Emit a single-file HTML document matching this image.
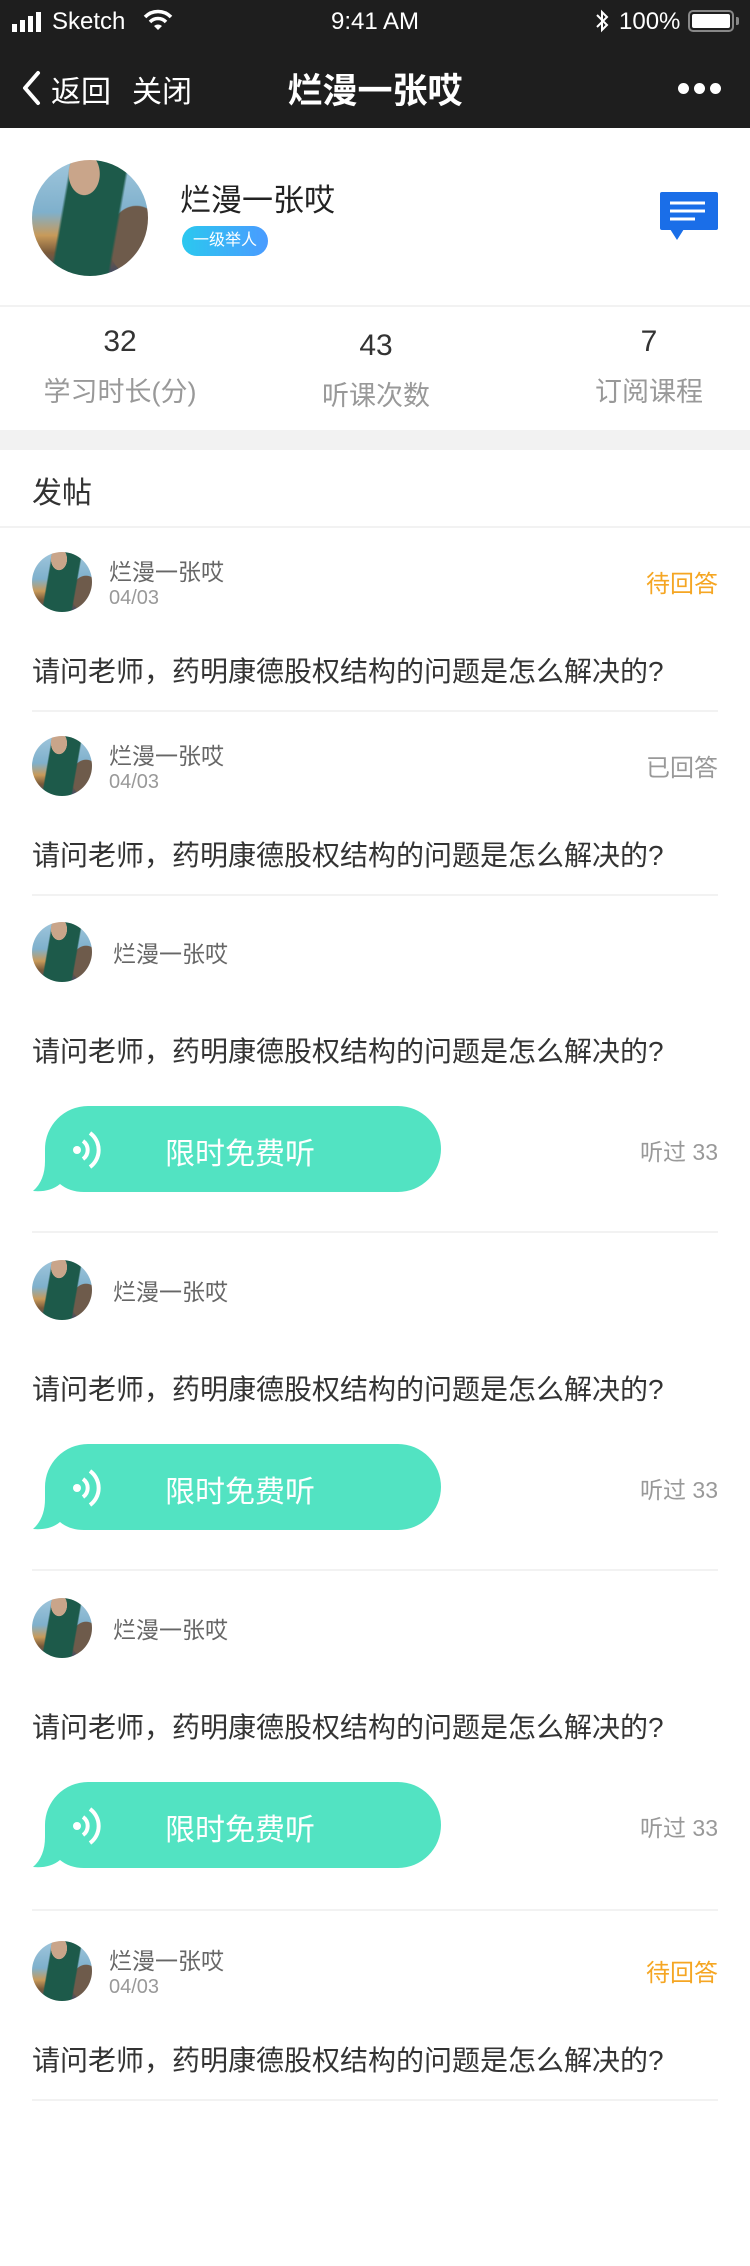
<!DOCTYPE html>
<html><head><meta charset="utf-8"><style>
*{margin:0;padding:0;box-sizing:border-box}
body{width:750px;height:2266px;background:#fff;position:relative;overflow:hidden;font-family:"Liberation Sans","Noto Sans CJK SC",sans-serif;color:#333}
.a{position:absolute;white-space:nowrap}
.av{position:absolute;border-radius:50%;overflow:hidden;background:
radial-gradient(ellipse 22% 30% at 45% 12%,#c9a58a 0 60%,transparent 62%),
linear-gradient(100deg,transparent 0 28%,#1d5a4a 30% 70%,transparent 72%),
radial-gradient(ellipse 40% 50% at 90% 70%,#6e5b4b 0 60%,transparent 62%),
linear-gradient(180deg,#9fc6dc 0%,#7fb0cc 45%,#c89a5a 65%,#7a5a3a 80%,#3a4a6a 100%)}
.nm{font-size:23px;color:#666}
.dt{font-size:20px;color:#999}
.q{font-size:28px;color:#333}
.ln{position:absolute;left:32px;width:686px;height:2px;background:#f2f2f2}
.st{font-size:24px;right:32px}
.bt{font-size:30px;color:#fff}
.ls{font-size:23px;color:#999;right:32px}
</style></head><body>
<div class="a" style="left:0;top:0;width:750px;height:128px;background:#1e1e1e"></div>
<svg class="a" style="left:12px;top:12px" width="36" height="20"><rect x="0" y="12" width="5" height="8" fill="#fff"/><rect x="8" y="8" width="5" height="12" fill="#fff"/><rect x="16" y="4" width="5" height="16" fill="#fff"/><rect x="24" y="0" width="5" height="20" fill="#fff"/></svg>
<div class="a" style="left:52px;top:8px;font-size:24px;color:#fff">Sketch</div>
<svg class="a" style="left:143px;top:9px" width="30" height="22" viewBox="0 0 30 22"><path d="M2 8 A18 18 0 0 1 28 8" stroke="#fff" stroke-width="3.5" fill="none"/><path d="M7 13 A11 11 0 0 1 23 13" stroke="#fff" stroke-width="3.5" fill="none"/><path d="M11 17 L15 21 L19 17 A6 6 0 0 0 11 17Z" fill="#fff"/></svg>
<div class="a" style="left:0;width:750px;text-align:center;top:8px;font-size:24px;color:#fff">9:41 AM</div>
<svg class="a" style="left:594px;top:9px" width="16" height="24" viewBox="0 0 16 24"><path d="M3 6 L13 16 L8 21 V3 L13 8 L3 18" stroke="#fff" stroke-width="2" fill="none"/></svg>
<div class="a" style="left:619px;top:8px;font-size:24px;color:#fff">100%</div>
<div class="a" style="left:688px;top:10px;width:46px;height:22px;border:2px solid #888;border-radius:5px;padding:2px"><div style="width:100%;height:100%;background:#fff;border-radius:2px"></div></div>
<div class="a" style="left:736px;top:17px;width:3px;height:8px;background:#888;border-radius:0 2px 2px 0"></div>
<svg class="a" style="left:20px;top:70px" width="24" height="36" viewBox="0 0 24 36"><path d="M18 3 L5 18 L18 33" stroke="#fff" stroke-width="4" fill="none" stroke-linecap="round" stroke-linejoin="round"/></svg>
<div class="a" style="left:51px;top:67px;font-size:30px;color:#fff">返回</div>
<div class="a" style="left:132px;top:67px;font-size:30px;color:#fff">关闭</div>
<div class="a" style="left:0;width:750px;text-align:center;top:63px;font-size:35px;font-weight:bold;color:#fff">烂漫一张哎</div>
<div class="a" style="left:678px;top:83px;width:11px;height:11px;border-radius:50%;background:#fff"></div>
<div class="a" style="left:694px;top:83px;width:11px;height:11px;border-radius:50%;background:#fff"></div>
<div class="a" style="left:710px;top:83px;width:11px;height:11px;border-radius:50%;background:#fff"></div>
<div class="av" style="left:32px;top:160px;width:116px;height:116px"></div>
<div class="a" style="left:180px;top:175px;font-size:31px;color:#222">烂漫一张哎</div>
<div class="a" style="left:182px;top:226px;width:86px;height:30px;border-radius:15px;background:linear-gradient(90deg,#2bc8ef,#4a9bff);color:#fff;font-size:16px;text-align:center;line-height:30px">一级举人</div>
<svg class="a" style="left:660px;top:192px" width="58" height="50" viewBox="0 0 58 50"><rect x="0" y="0" width="58" height="38" rx="2" fill="#1a6ee8"/><path d="M10 11 H45 M10 19 H45 M10 27 H35" stroke="#fff" stroke-width="3"/><path d="M10 37 L17 48 L24 37Z" fill="#1a6ee8"/></svg>
<div class="a" style="left:0;top:305px;width:750px;height:2px;background:#f2f2f2"></div>
<div class="a" style="left:20px;width:200px;text-align:center;top:325px;font-size:30px;color:#333">32</div>
<div class="a" style="left:20px;width:200px;text-align:center;top:370px;font-size:27px;color:#999">学习时长(分)</div>
<div class="a" style="left:276px;width:200px;text-align:center;top:329px;font-size:30px;color:#333">43</div>
<div class="a" style="left:276px;width:200px;text-align:center;top:374px;font-size:27px;color:#999">听课次数</div>
<div class="a" style="left:549px;width:200px;text-align:center;top:325px;font-size:30px;color:#333">7</div>
<div class="a" style="left:549px;width:200px;text-align:center;top:370px;font-size:27px;color:#999">订阅课程</div>
<div class="a" style="left:0;top:430px;width:750px;height:20px;background:#f2f2f2"></div>
<div class="a" style="left:32px;top:468px;font-size:30px;color:#333">发帖</div>
<div class="a" style="left:0;top:526px;width:750px;height:2px;background:#f2f2f2"></div>

<div class="av" style="left:32px;top:552px;width:60px;height:60px"></div>
<div class="a nm" style="left:109px;top:553px">烂漫一张哎</div>
<div class="a dt" style="left:109px;top:587px">04/03</div>
<div class="a st" style="top:564px;color:#f5a623">待回答</div>
<div class="a q" style="left:32px;top:650px">请问老师，药明康德股权结构的问题是怎么解决的?</div>
<div class="ln" style="top:710px"></div>
<div class="av" style="left:32px;top:736px;width:60px;height:60px"></div>
<div class="a nm" style="left:109px;top:737px">烂漫一张哎</div>
<div class="a dt" style="left:109px;top:771px">04/03</div>
<div class="a st" style="top:748px;color:#999">已回答</div>
<div class="a q" style="left:32px;top:834px">请问老师，药明康德股权结构的问题是怎么解决的?</div>
<div class="ln" style="top:894px"></div>

<div class="av" style="left:32px;top:922px;width:60px;height:60px"></div>
<div class="a nm" style="left:113px;top:935px">烂漫一张哎</div>
<div class="a q" style="left:32px;top:1030px">请问老师，药明康德股权结构的问题是怎么解决的?</div>
<svg class="a" style="left:32px;top:1106px" width="410" height="88" viewBox="0 0 410 88"><path d="M56 0 H366 A43 43 0 0 1 366 86 H52 C42 86 34 83 28 78 C21 84 11 86 1 85 C9 78 13 68 13 55 V43 A43 43 0 0 1 56 0 Z" fill="#52e3c2"/><circle cx="45" cy="44" r="4" fill="#fff"/><path d="M51 35 A11 11 0 0 1 51 53" stroke="#fff" stroke-width="4" fill="none"/><path d="M58 27 A21 21 0 0 1 58 61" stroke="#fff" stroke-width="4" fill="none"/></svg>
<div class="a bt" style="left:165px;top:1129px">限时免费听</div>
<div class="a ls" style="top:1133px">听过 33</div>
<div class="ln" style="top:1231px"></div>

<div class="av" style="left:32px;top:1260px;width:60px;height:60px"></div>
<div class="a nm" style="left:113px;top:1273px">烂漫一张哎</div>
<div class="a q" style="left:32px;top:1368px">请问老师，药明康德股权结构的问题是怎么解决的?</div>
<svg class="a" style="left:32px;top:1444px" width="410" height="88" viewBox="0 0 410 88"><path d="M56 0 H366 A43 43 0 0 1 366 86 H52 C42 86 34 83 28 78 C21 84 11 86 1 85 C9 78 13 68 13 55 V43 A43 43 0 0 1 56 0 Z" fill="#52e3c2"/><circle cx="45" cy="44" r="4" fill="#fff"/><path d="M51 35 A11 11 0 0 1 51 53" stroke="#fff" stroke-width="4" fill="none"/><path d="M58 27 A21 21 0 0 1 58 61" stroke="#fff" stroke-width="4" fill="none"/></svg>
<div class="a bt" style="left:165px;top:1467px">限时免费听</div>
<div class="a ls" style="top:1471px">听过 33</div>
<div class="ln" style="top:1569px"></div>

<div class="av" style="left:32px;top:1598px;width:60px;height:60px"></div>
<div class="a nm" style="left:113px;top:1611px">烂漫一张哎</div>
<div class="a q" style="left:32px;top:1706px">请问老师，药明康德股权结构的问题是怎么解决的?</div>
<svg class="a" style="left:32px;top:1782px" width="410" height="88" viewBox="0 0 410 88"><path d="M56 0 H366 A43 43 0 0 1 366 86 H52 C42 86 34 83 28 78 C21 84 11 86 1 85 C9 78 13 68 13 55 V43 A43 43 0 0 1 56 0 Z" fill="#52e3c2"/><circle cx="45" cy="44" r="4" fill="#fff"/><path d="M51 35 A11 11 0 0 1 51 53" stroke="#fff" stroke-width="4" fill="none"/><path d="M58 27 A21 21 0 0 1 58 61" stroke="#fff" stroke-width="4" fill="none"/></svg>
<div class="a bt" style="left:165px;top:1805px">限时免费听</div>
<div class="a ls" style="top:1809px">听过 33</div>
<div class="ln" style="top:1909px"></div>

<div class="av" style="left:32px;top:1941px;width:60px;height:60px"></div>
<div class="a nm" style="left:109px;top:1942px">烂漫一张哎</div>
<div class="a dt" style="left:109px;top:1976px">04/03</div>
<div class="a st" style="top:1953px;color:#f5a623">待回答</div>
<div class="a q" style="left:32px;top:2039px">请问老师，药明康德股权结构的问题是怎么解决的?</div>
<div class="ln" style="top:2099px"></div>
</body></html>
